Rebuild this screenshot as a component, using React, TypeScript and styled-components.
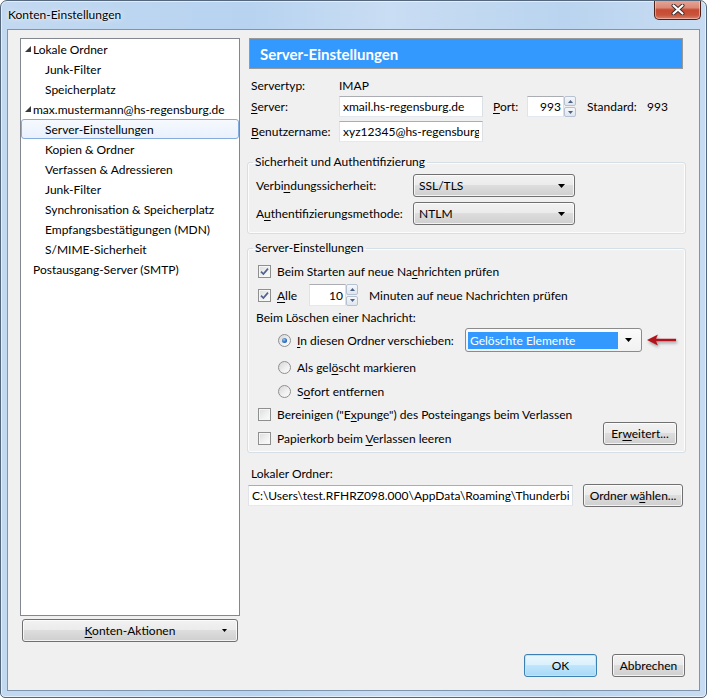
import React from 'react';
import styled, { createGlobalStyle } from 'styled-components';

const FONT = `Lato, "Noto Sans", "DejaVu Sans", sans-serif`;

const Global = createGlobalStyle`
  html, body { margin: 0; padding: 0; background: #ffffff; }
  body { font-family: ${FONT}; font-size: 12px; color: #000; }
  * { box-sizing: border-box; }
`;

const Window = styled.div`
  width: 707px;
  height: 698px;
  display: flex;
  flex-direction: column;
  border: 1px solid #55677c;
  border-radius: 7px 7px 5px 5px;
  overflow: hidden;
  background: linear-gradient(90deg, #c3d9f0 0%, #b7d3f0 35%, #c9ddf3 55%, #bad4ef 80%, #c7dcf2 100%);
  box-shadow: inset 0 0 0 1px rgba(255, 255, 255, 0.55);
`;

const TitleBar = styled.div`
  height: 28px;
  flex: none;
  display: flex;
  align-items: flex-start;
  padding-left: 7px;
`;

const Title = styled.span`
  line-height: 28px;
  font-size: 12px;
  color: #000;
  text-shadow: 0 0 6px rgba(255, 255, 255, 0.9), 0 0 2px rgba(255, 255, 255, 0.9);
`;

const CloseButton = styled.div`
  margin-left: auto;
  margin-right: 5px;
  margin-top: -1px;
  width: 47px;
  height: 20px;
  border: 1px solid #4f2219;
  border-top: none;
  border-radius: 0 0 5px 5px;
  background: linear-gradient(180deg, #e8a797 0%, #d98a78 40%, #c64a31 52%, #c8553c 80%, #d9836f 100%);
  box-shadow: inset 0 0 0 1px rgba(255, 220, 210, 0.5);
  display: flex;
  align-items: center;
  justify-content: center;
`;

const Client = styled.div`
  flex: 1;
  margin: 0 6px 6px 6px;
  border: 1px solid #7f95ad;
  background: #f0f0f0;
  display: flex;
  flex-direction: column;
  padding: 8px 12px 0 12px;
`;

const MainRow = styled.div`
  display: flex;
  gap: 7px;
  height: 604px;
`;

const LeftColumn = styled.div`
  width: 220px;
  flex: none;
  display: flex;
  flex-direction: column;
`;

const Tree = styled.div`
  height: 578px;
  background: #fff;
  border: 1px solid #828790;
  padding-top: 0;
`;

const TreeRow = styled.div<{ $indent: number; $selected?: boolean }>`
  height: 20px;
  display: flex;
  align-items: center;
  gap: 2px;
  padding-left: ${(p) => p.$indent}px;
  border: 1px solid ${(p) => (p.$selected ? '#84acdd' : 'transparent')};
  border-radius: 3px;
  white-space: nowrap;
  background: ${(p) => (p.$selected ? 'linear-gradient(180deg, #f6f9fe 0%, #e9f1fc 100%)' : 'transparent')};
  & > svg { flex: none; }
`;

const ActionButtonWrap = styled.div`
  margin: 3px 2px 0 2px;
`;

const WinButton = styled.button<{ $w?: number; $default?: boolean }>`
  height: 23px;
  width: ${(p) => (p.$w ? `${p.$w}px` : '100%')};
  font-family: ${FONT};
  font-size: 12px;
  color: #000;
  padding: 0;
  border: 1px solid ${(p) => (p.$default ? '#3c7fb1' : '#707070')};
  border-radius: 3px;
  background: ${(p) =>
    p.$default
      ? 'linear-gradient(180deg, #eaf6fd 0%, #d9f0fc 49%, #bee6fd 50%, #a7d9f5 100%)'
      : 'linear-gradient(180deg, #f2f2f2 0%, #ebebeb 49%, #dddddd 50%, #cfcfcf 100%)'};
  box-shadow: inset 0 0 0 1px ${(p) => (p.$default ? '#bfe6f8' : 'rgba(255,255,255,0.75)')};
  flex: none;
`;

const ActionButton = styled(WinButton)`
  display: grid;
  grid-template-columns: 1fr auto 1fr;
  align-items: center;
  padding: 0 10px;
`;

const ArrowCell = styled.span`
  justify-self: end;
  display: flex;
`;

const RightColumn = styled.div`
  width: 439px;
  flex: none;
  display: flex;
  flex-direction: column;
`;

const Header = styled.div`
  height: 31px;
  margin: 0 3px 0 2px;
  background: #3399ff;
  border: 1px solid #999999;
  color: #fff;
  font-weight: bold;
  font-size: 15px;
  display: flex;
  align-items: center;
  padding-left: 10px;
`;

const FieldRow = styled.div<{ $mt: number; $h: number; $pl?: number }>`
  display: flex;
  align-items: center;
  height: ${(p) => p.$h}px;
  margin-top: ${(p) => p.$mt}px;
  padding-left: ${(p) => p.$pl ?? 4}px;
  white-space: nowrap;
`;

const Label = styled.span<{ $w: number }>`
  width: ${(p) => p.$w}px;
  flex: none;
  white-space: nowrap;
`;

const U = styled.span`
  text-decoration: underline;
  text-underline-offset: 2px;
`;

const TextBox = styled.input<{ $w: number; $h?: number; $right?: boolean }>`
  width: ${(p) => p.$w}px;
  height: ${(p) => p.$h ?? 21}px;
  flex: none;
  font-family: ${FONT};
  font-size: 12px;
  color: #000;
  background: #fff;
  border: 1px solid;
  border-color: #abadb3 #dbdfe6 #e3e9ef #e2e3ea;
  padding: 0 ${(p) => (p.$right ? 2 : 3)}px;
  text-align: ${(p) => (p.$right ? 'right' : 'left')};
  outline: none;
  margin: 0;
`;

const Spin = styled.div<{ $h: number }>`
  width: 12px;
  height: ${(p) => p.$h}px;
  flex: none;
  display: flex;
  flex-direction: column;
  gap: 1px;
  margin-right: 11px;
`;

const SpinButton = styled.div`
  flex: 1;
  border: 1px solid #b6c2d1;
  border-radius: 2px;
  background: linear-gradient(180deg, #f5f7fa 0%, #dfe6ee 100%);
  display: flex;
  align-items: center;
  justify-content: center;
`;

const Group = styled.fieldset<{ $mt: number }>`
  margin: ${(p) => p.$mt}px 0 0 0;
  padding: 0 8px 8px 8px;
  border: 1px solid #d5dfe5;
  border-radius: 3px;
  box-shadow: inset 0 0 0 1px rgba(255, 255, 255, 0.8);
  min-width: 0;
  display: flex;
  flex-direction: column;
`;

const Group2 = styled(Group)`
  padding-bottom: 4px;
`;

const Legend = styled.legend`
  padding: 0 2px;
  margin-left: -3px;
  line-height: 16px;
`;

const Select = styled.div<{ $w: number }>`
  width: ${(p) => p.$w}px;
  height: 23px;
  flex: none;
  border: 1px solid #707070;
  border-radius: 3px;
  background: linear-gradient(180deg, #f2f2f2 0%, #ebebeb 49%, #dddddd 50%, #cfcfcf 100%);
  box-shadow: inset 0 0 0 1px rgba(255, 255, 255, 0.75);
  display: flex;
  align-items: center;
  padding: 0 9px 0 5px;
`;

const SelectText = styled.span`
  flex: 1;
`;

const EditSelect = styled.div<{ $w: number }>`
  width: ${(p) => p.$w}px;
  height: 24px;
  flex: none;
  border: 1px solid #8b8b8b;
  border-radius: 3px;
  background: linear-gradient(180deg, #fbfbfb 0%, #f1f1f1 100%);
  display: flex;
  align-items: center;
  padding: 2px 9px 2px 2px;
  gap: 7px;
`;

const Highlight = styled.span`
  flex: 1;
  height: 17px;
  background: #3399ff;
  color: #fff;
  display: flex;
  align-items: center;
  padding-left: 2px;
`;

const RedArrow = styled.svg`
  margin-left: 5px;
  filter: drop-shadow(1px 2px 1.5px rgba(0, 0, 0, 0.35));
`;

const Box = styled.span`
  width: 13px;
  height: 13px;
  flex: none;
  border: 1px solid #8e8f8f;
  background: linear-gradient(135deg, #dcdcdc 0%, #f0f0f0 55%, #fcfcfc 100%);
  box-shadow: inset 0 0 0 1px #f6f6f6;
  display: flex;
  align-items: center;
  justify-content: center;
  margin-right: 6px;
`;

const Radio = styled.span`
  width: 13px;
  height: 13px;
  flex: none;
  border: 1px solid #8e8f8f;
  border-radius: 50%;
  background: linear-gradient(135deg, #d6d6d6 0%, #f1f1f1 60%, #fbfbfb 100%);
  display: flex;
  align-items: center;
  justify-content: center;
  margin-right: 6px;
`;

const RadioDot = styled.span`
  width: 5px;
  height: 5px;
  border-radius: 50%;
  background: radial-gradient(circle at 40% 35%, #9cc8f2 0%, #2a6fc0 55%, #1b4f95 100%);
`;

const BottomBlock = styled.div`
  margin-top: 3px;
  display: flex;
  justify-content: space-between;
`;

const CheckColumn = styled.div`
  display: flex;
  flex-direction: column;
  gap: 4px;
`;

const SideButton = styled(WinButton)`
  align-self: flex-end;
  margin-bottom: 3px;
`;

const PathRow = styled.div`
  display: flex;
  align-items: center;
  height: 23px;
  margin-top: 3px;
  padding-left: 1px;
  gap: 10px;
`;

const BottomRow = styled.div`
  display: flex;
  justify-content: flex-end;
  gap: 15px;
  margin-top: 12px;
  padding-right: 2px;
`;

const Check = () => (
  <svg width="9" height="9" viewBox="0 0 9 9">
    <path d="M1 4.6 L3.4 7 L8 1.6" fill="none" stroke="#4f6290" strokeWidth="1.7" />
  </svg>
);

const Tri = ({ up }: { up?: boolean }) => (
  <svg width="5" height="3" viewBox="0 0 5 3">
    <polygon points={up ? '2.5,0 5,3 0,3' : '0,0 5,0 2.5,3'} fill="#4d6185" />
  </svg>
);

const DropArrow = () => (
  <svg width="7" height="4" viewBox="0 0 7 4">
    <polygon points="0,0 7,0 3.5,4" fill="#000" />
  </svg>
);

const Expander = () => (
  <svg width="6" height="6" viewBox="0 0 6 6">
    <polygon points="6,0 6,6 0,6" fill="#3a3a3a" />
  </svg>
);

const CheckItem = ({ checked, children }: { checked?: boolean; children: React.ReactNode }) => (
  <FieldRow $mt={0} $h={20} $pl={2}>
    <Box>{checked && <Check />}</Box>
    <span>{children}</span>
  </FieldRow>
);

const treeItems: { text: string; indent: number; expander?: boolean; selected?: boolean }[] = [
  { text: 'Lokale Ordner', indent: 3, expander: true },
  { text: 'Junk-Filter', indent: 23 },
  { text: 'Speicherplatz', indent: 23 },
  { text: 'max.mustermann@hs-regensburg.de', indent: 3, expander: true },
  { text: 'Server-Einstellungen', indent: 23, selected: true },
  { text: 'Kopien & Ordner', indent: 23 },
  { text: 'Verfassen & Adressieren', indent: 23 },
  { text: 'Junk-Filter', indent: 23 },
  { text: 'Synchronisation & Speicherplatz', indent: 23 },
  { text: 'Empfangsbestätigungen (MDN)', indent: 23 },
  { text: 'S/MIME-Sicherheit', indent: 23 },
  { text: 'Postausgang-Server (SMTP)', indent: 11 },
];

export default function App() {
  return (
    <>
      <Global />
      <Window>
        <TitleBar>
          <Title>Konten-Einstellungen</Title>
          <CloseButton>
            <svg width="14" height="11" viewBox="0 0 14 11">
              <path d="M2.5 1.5 L11.5 9.5 M11.5 1.5 L2.5 9.5" stroke="#3b2a28" strokeWidth="4" strokeLinecap="round" />
              <path d="M2.5 1.5 L11.5 9.5 M11.5 1.5 L2.5 9.5" stroke="#ffffff" strokeWidth="2.2" strokeLinecap="round" />
            </svg>
          </CloseButton>
        </TitleBar>
        <Client>
          <MainRow>
            <LeftColumn>
              <Tree>
                {treeItems.map((it, i) => (
                  <TreeRow key={i} $indent={it.indent} $selected={it.selected}>
                    {it.expander && <Expander />}
                    <span>{it.text}</span>
                  </TreeRow>
                ))}
              </Tree>
              <ActionButtonWrap>
                <ActionButton>
                  <span />
                  <span>
                    <U>K</U>onten-Aktionen
                  </span>
                  <ArrowCell>
                    <svg width="5" height="3" viewBox="0 0 5 3">
                      <polygon points="0,0 5,0 2.5,3" fill="#000" />
                    </svg>
                  </ArrowCell>
                </ActionButton>
              </ActionButtonWrap>
            </LeftColumn>

            <RightColumn>
              <Header>Server-Einstellungen</Header>

              <FieldRow $mt={6} $h={20}>
                <Label $w={88}>Servertyp:</Label>
                <span>IMAP</span>
              </FieldRow>
              <FieldRow $mt={1} $h={21}>
                <Label $w={88}>
                  <U>S</U>erver:
                </Label>
                <TextBox $w={144} readOnly value="xmail.hs-regensburg.de" />
                <Label $w={34} style={{ marginLeft: 10 }}>
                  <U>P</U>ort:
                </Label>
                <TextBox $w={37} $right readOnly value="993" />
                <Spin $h={21}>
                  <SpinButton>
                    <Tri up />
                  </SpinButton>
                  <SpinButton>
                    <Tri />
                  </SpinButton>
                </Spin>
                <Label $w={60}>Standard:</Label>
                <span>993</span>
              </FieldRow>
              <FieldRow $mt={4} $h={21}>
                <Label $w={88}>
                  <U>B</U>enutzername:
                </Label>
                <TextBox $w={144} readOnly value="xyz12345@hs-regensburg.de" />
              </FieldRow>

              <Group $mt={12}>
                <Legend>Sicherheit und Authentifizierung</Legend>
                <FieldRow $mt={4} $h={23} $pl={0}>
                  <Label $w={157}>
                    Verbi<U>n</U>dungssicherheit:
                  </Label>
                  <Select $w={162}>
                    <SelectText>SSL/TLS</SelectText>
                    <DropArrow />
                  </Select>
                </FieldRow>
                <FieldRow $mt={5} $h={23} $pl={0}>
                  <Label $w={157}>
                    A<U>u</U>thentifizierungsmethode:
                  </Label>
                  <Select $w={162}>
                    <SelectText>NTLM</SelectText>
                    <DropArrow />
                  </Select>
                </FieldRow>
              </Group>

              <Group2 $mt={6}>
                <Legend>Server-Einstellungen</Legend>
                <FieldRow $mt={5} $h={20} $pl={2}>
                  <Box>
                    <Check />
                  </Box>
                  <span>
                    Beim Starten auf neue Na<U>c</U>hrichten prüfen
                  </span>
                </FieldRow>
                <FieldRow $mt={2} $h={24} $pl={2}>
                  <Box>
                    <Check />
                  </Box>
                  <Label $w={32}>
                    <U>A</U>lle
                  </Label>
                  <TextBox $w={37} $h={22} $right readOnly value="10" />
                  <Spin $h={22}>
                    <SpinButton>
                      <Tri up />
                    </SpinButton>
                    <SpinButton>
                      <Tri />
                    </SpinButton>
                  </Spin>
                  <span>Minuten auf neue Nachrichten prüfen</span>
                </FieldRow>
                <FieldRow $mt={0} $h={20} $pl={0}>
                  Beim Löschen einer Nachricht:
                </FieldRow>
                <FieldRow $mt={1} $h={24} $pl={22}>
                  <Radio>
                    <RadioDot />
                  </Radio>
                  <Label $w={168}>
                    <U>I</U>n diesen Ordner verschieben:
                  </Label>
                  <EditSelect $w={177}>
                    <Highlight>Gelöschte Elemente</Highlight>
                    <DropArrow />
                  </EditSelect>
                  <RedArrow width="33" height="14" viewBox="0 0 33 14">
                    <polygon points="0,7 12,1 10,5.5 32,5.5 32,8.5 10,8.5 12,13" fill="#b3121c" />
                  </RedArrow>
                </FieldRow>
                <FieldRow $mt={5} $h={20} $pl={22}>
                  <Radio />
                  <span>
                    Als gel<U>ö</U>scht markieren
                  </span>
                </FieldRow>
                <FieldRow $mt={4} $h={20} $pl={22}>
                  <Radio />
                  <span>
                    S<U>o</U>fort entfernen
                  </span>
                </FieldRow>
                <BottomBlock>
                  <CheckColumn>
                    <CheckItem>
                      Bereinigen ("E<U>x</U>punge") des Posteingangs beim Verlassen
                    </CheckItem>
                    <CheckItem>
                      Papierkorb beim <U>V</U>erlassen leeren
                    </CheckItem>
                  </CheckColumn>
                  <SideButton $w={74}>
                    Er<U>w</U>eitert...
                  </SideButton>
                </BottomBlock>
              </Group2>

              <FieldRow $mt={12} $h={16}>
                Lokaler Ordner:
              </FieldRow>
              <PathRow>
                <TextBox $w={325} readOnly value="C:\Users\test.RFHRZ098.000\AppData\Roaming\Thunderbird\Profiles" />
                <WinButton $w={100}>
                  Ordner w<U>ä</U>hlen...
                </WinButton>
              </PathRow>
            </RightColumn>
          </MainRow>

          <BottomRow>
            <WinButton $w={73} $default>
              OK
            </WinButton>
            <WinButton $w={73}>Abbrechen</WinButton>
          </BottomRow>
        </Client>
      </Window>
    </>
  );
}
